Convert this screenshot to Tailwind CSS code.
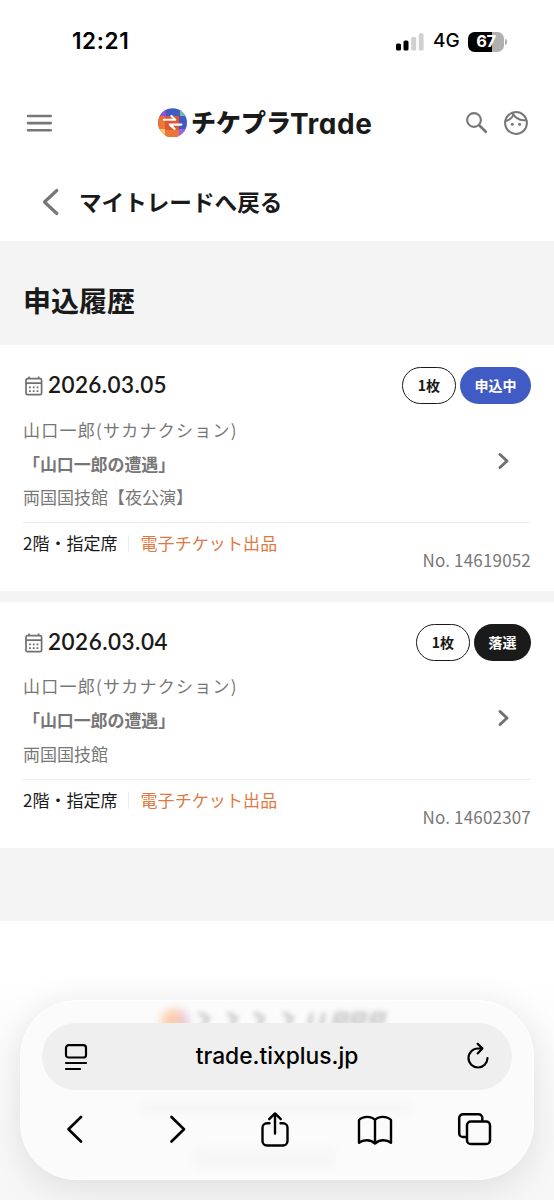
<!DOCTYPE html>
<html lang="ja">
<head>
<meta charset="utf-8">
<meta name="viewport" content="width=device-width, initial-scale=1">
<title>申込履歴</title>
<script src="https://cdn.jsdelivr.net/npm/@tailwindcss/browser@4"></script>
</head>
<body class="relative h-[1200px] w-[554px] overflow-hidden bg-white font-['Noto_Sans_CJK_JP',sans-serif] text-[#1a1a1a]">

<!-- Status bar -->
<div class="flex h-[84px] items-center justify-between pr-[47px] pl-[72px] font-['Inter',sans-serif] text-black">
  <span class="mt-[-2px] text-[22.5px] font-semibold tracking-[0.6px]">12:21</span>
  <div class="mt-[-1px] flex items-center">
    <svg class="h-[18px] w-[28px]" viewBox="0 0 28 18"><rect x="0" y="10.5" width="5" height="7" rx="1.6"/><rect x="7.5" y="7.5" width="5" height="10" rx="1.6"/><rect x="15.2" y="4" width="5" height="13.5" rx="1.6" fill="#d0d0d0"/><rect x="22.8" y="0.3" width="4.8" height="17.2" rx="1.6" fill="#d0d0d0"/></svg>
    <span class="ml-[9px] w-[28px] text-[19px] font-medium tracking-[0.1px]">4G</span>
    <div class="ml-[7px] flex h-[20px] w-[36px] items-center justify-center rounded-[6.5px] bg-linear-to-r from-black from-67% to-[#b0b0b0] to-67% text-[16.5px] font-bold tracking-[-0.3px] text-white">67</div>
    <div class="ml-[1px] h-[6px] w-[2px] rounded-r-full bg-[#b0b0b0]"></div>
  </div>
</div>

<!-- Site header -->
<header class="flex h-[78px] items-center pl-[26px]">
  <svg class="mt-[-1px] h-[20px] w-[27px] shrink-0" viewBox="0 0 27 20" stroke="#777" stroke-width="2.6" stroke-linecap="round"><path d="M2 3h22.7M2 10.1h22.7M2 17.2h22.7"/></svg>
  <svg class="ml-[105px] h-[30px] w-[30px] shrink-0" viewBox="0 0 30 30">
    <defs><clipPath id="disc"><circle cx="14.6" cy="14.7" r="14.4"/></clipPath></defs>
    <g clip-path="url(#disc)">
      <path fill="#425bc3" d="M0 0h30v30H0z"/>
      <path fill="#8a55d6" d="M0 0h8v8H0z"/><path fill="#66c2a5" d="M22 0h8v8h-8z"/>
      <path fill="#e96b32" d="M0 8h8v14H0zM7 21h14v9H7z"/><path fill="#c95048" d="M7 8h7v8H7z"/>
      <path fill="#dd572f" d="M7 8h14v14H7z"/><path fill="#ee7538" d="M0 12h7v9H0zM7 22h14v8H7z"/>
      <path fill="#ffc66b" d="M0 21h7v9H0z"/><path fill="#9764ec" d="M21 21h9v9h-9z"/>
    </g>
    <path d="M5.8 11.8h11.4l-3.8-3.9M23.4 16.6H11.8l4.8 4.3" fill="none" stroke="#fff" stroke-width="2.1" stroke-linecap="round" stroke-linejoin="round"/>
  </svg>
  <div class="flex w-[184px] items-center pl-[3px]">
    <span class="mt-[-3px] text-[25px] leading-none font-black whitespace-nowrap">チケプラ</span>
    <span class="mt-[2px] ml-[-1px] font-['Inter',sans-serif] text-[28px] leading-[34px] font-bold tracking-[0.5px] [font-feature-settings:'cv11']">Trade</span>
  </div>
  <svg class="ml-[93px] h-[24px] w-[24px] shrink-0" viewBox="0 0 24 24" fill="none" stroke="#777" stroke-width="2.1"><circle cx="9" cy="9" r="6.9"/><path stroke-width="2.7" stroke-linecap="round" d="M14.2 14.2l6.600 6.600"/></svg>
  <svg class="ml-[14px] h-[26px] w-[26px] shrink-0" viewBox="0 0 26 26" fill="none" stroke="#777" stroke-width="2"><circle cx="13" cy="13" r="10.9"/><path d="M9.2 3c3 5 7.600 8 14.200 6.900M2.700 11c4.500-1.100 7.100-3.600 8.100-7.400"/><circle cx="9.300" cy="14.200" r="1.500" fill="#777" stroke="none"/><circle cx="16.600" cy="14.200" r="1.500" fill="#777" stroke="none"/></svg>
</header>

<!-- Back link -->
<div class="flex h-[79px] items-center pl-[42px]">
  <svg class="h-[28px] w-[18px]" viewBox="0 0 18 28"><path d="M14.8 2.5L2.500 14l12.300 11.500" fill="none" stroke="#777" stroke-width="3.2" stroke-linecap="round" stroke-linejoin="round"/></svg>
  <span class="ml-[19px] text-[22.6px] font-bold whitespace-nowrap">マイトレードへ戻る</span>
</div>

<main class="h-[680px] bg-[#f4f4f4]">
  <h1 class="flex h-[104px] items-center pt-[13px] pl-[23px] text-[28px] leading-none font-bold">申込履歴</h1>

  <article class="h-[246px] bg-white px-[23px] pt-[22px]">
    <div class="flex h-[37px] items-center">
      <svg class="mt-[1px] ml-[2px] h-[20px] w-[18px]" viewBox="0 0 18 20" fill="none" stroke="#707070" stroke-width="1.7"><rect x="1" y="2.7" width="15.6" height="16" rx="1.5"/><path d="M1 7.2h15.6M4 .4v2.6M13.6 .4v2.6"/><path stroke-width="1.8" stroke-dasharray="1.8 2" d="M4 11.3h10M4 15.2h10"/></svg>
      <span class="mt-[-1px] ml-[5px] font-['Lato',sans-serif] text-[22.500px] leading-none font-semibold tracking-[0.4px]">2026.03.05</span>
      <span class="ml-auto flex h-[37px] w-[54px] items-center justify-center rounded-full border-[1.5px] border-[#1a1a1a] text-[14px] font-bold">1枚</span>
      <span class="ml-[4px] flex h-[37px] w-[71px] items-center justify-center rounded-full bg-[#405bc3] text-[14px] font-bold text-white">申込中</span>
    </div>
    <div class="mt-[9px] flex h-[110px] items-center justify-between border-b border-[#ededed] pb-[8px] text-[17px] leading-[33.7px] text-[#777]">
      <div>
        <p class="tracking-[1.25px]">山口一郎(サカナクション)</p>
        <p class="font-bold tracking-[-0.1px]">「山口一郎の遭遇」</p>
        <p>両国国技館【夜公演】</p>
      </div>
      <svg class="mt-[-5px] mr-[21px] h-[18px] w-[13px]" viewBox="0 0 13 18"><path d="M3 2.500L10 9l-7 6.500" fill="none" stroke="#707070" stroke-width="3" stroke-linecap="round" stroke-linejoin="round"/></svg>
    </div>
    <div class="flex text-[17px] leading-[26px]">
      <span class="mt-[7px]">2階・指定席</span>
      <span class="mt-[12px] ml-[11px] h-[17px] w-px bg-[#ededed]"></span>
      <span class="mt-[7px] ml-[11px] tracking-[0.1px] text-[#e07840]">電子チケット出品</span>
      <span class="mt-[24px] ml-auto tracking-[0.18px] text-[#777]">No. 14619052</span>
    </div>
  </article>

  <article class="mt-[11px] h-[246px] bg-white px-[23px] pt-[22px]">
    <div class="flex h-[37px] items-center">
      <svg class="mt-[1px] ml-[2px] h-[20px] w-[18px]" viewBox="0 0 18 20" fill="none" stroke="#707070" stroke-width="1.7"><rect x="1" y="2.7" width="15.6" height="16" rx="1.5"/><path d="M1 7.2h15.6M4 .4v2.6M13.6 .4v2.6"/><path stroke-width="1.8" stroke-dasharray="1.8 2" d="M4 11.3h10M4 15.2h10"/></svg>
      <span class="mt-[-1px] ml-[5px] font-['Lato',sans-serif] text-[22.500px] leading-none font-semibold tracking-[0.5px]">2026.03.04</span>
      <span class="ml-auto flex h-[37px] w-[54px] items-center justify-center rounded-full border-[1.5px] border-[#1a1a1a] text-[14px] font-bold">1枚</span>
      <span class="ml-[4px] flex h-[37px] w-[57px] items-center justify-center rounded-full bg-[#1a1a1a] text-[14px] font-bold text-white">落選</span>
    </div>
    <div class="mt-[9px] flex h-[110px] items-center justify-between border-b border-[#ededed] pb-[9px] text-[17px] leading-[33.7px] text-[#777]">
      <div>
        <p class="tracking-[1.25px]">山口一郎(サカナクション)</p>
        <p class="font-bold tracking-[-0.1px]">「山口一郎の遭遇」</p>
        <p>両国国技館</p>
      </div>
      <svg class="mt-[-5px] mr-[21px] h-[18px] w-[13px]" viewBox="0 0 13 18"><path d="M3 2.500L10 9l-7 6.500" fill="none" stroke="#707070" stroke-width="3" stroke-linecap="round" stroke-linejoin="round"/></svg>
    </div>
    <div class="flex text-[17px] leading-[26px]">
      <span class="mt-[7px]">2階・指定席</span>
      <span class="mt-[12px] ml-[11px] h-[17px] w-px bg-[#ededed]"></span>
      <span class="mt-[7px] ml-[11px] tracking-[0.1px] text-[#e07840]">電子チケット出品</span>
      <span class="mt-[24px] ml-auto tracking-[0.18px] text-[#777]">No. 14602307</span>
    </div>
  </article>
</main>

<!-- Floating browser toolbar -->
<div class="absolute inset-x-0 bottom-0 h-[235px] bg-linear-to-b from-transparent to-[#f6f6f6]"></div>
<nav class="absolute top-[1000px] left-[20px] h-[180px] w-[514px] overflow-visible rounded-[56px] border border-white bg-[#fbfbfb] px-[21px] pt-[22px] font-['Inter',sans-serif] text-black shadow-[0_6px_36px_rgba(0,0,0,0.11)]">
  <!-- Page footer showing through the glass -->
  <div class="absolute top-[8px] left-[140px] h-[26px] w-[28px] rounded-full bg-linear-to-r from-[#ff8a3d] from-60% to-[#9764ec] opacity-40 blur-[4px]"></div>
  <svg class="absolute top-[8px] left-[174px] h-[20px] w-[204px] opacity-25 blur-[2.5px]" viewBox="0 0 204 20" fill="none" stroke="#444" stroke-width="4.500"><path d="M4 4l9 5-5 8M32 4l9 5-5 8M59 4l9 5-5 8M88 4l9 5-5 8M117 4l-3 14M129 4l-3 14M152 5h-10l-3 8h11zM170 5h-10l-3 8h11zM189 5h-10l-3 8h11z"/></svg>
  <div class="absolute top-[102px] left-[120px] h-[10px] w-[270px] bg-black/2 blur-[4px]"></div>
  <div class="absolute top-[147px] left-[174px] h-[20px] w-[140px] bg-black/2 blur-[5px]"></div>

  <div class="relative flex h-[67px] items-center rounded-full bg-[#efefef] px-[22px]">
    <svg class="h-[28px] w-[24px]" viewBox="0 0 24 28" fill="none" stroke="#000" stroke-width="2.2" stroke-linecap="round"><rect x="2" y="2.2" width="20" height="12.300" rx="2.600"/><path d="M2 20h20M2 26h14"/></svg>
    <span class="flex-1 text-center text-[22.800px] font-medium">trade.tixplus.jp</span>
    <svg class="mt-[-2px] h-[28px] w-[24px]" viewBox="0 0 24 28" fill="none" stroke="#000" stroke-width="2.2" stroke-linecap="round" stroke-linejoin="round"><path d="M21.500 16a9.500 9.500 0 1 1-9.500-9.500h3.600M11.600 1.800l4.800 4.600-4.800 5"/></svg>
  </div>

  <div class="relative flex h-[80px] items-center pl-[24px]">
    <svg class="mt-[-2px] h-[28px] w-[18px]" viewBox="0 0 18 28" fill="none" stroke="#000" stroke-width="2.600" stroke-linecap="round" stroke-linejoin="round"><path d="M15 2L2.500 14.200 15 26.500"/></svg>
    <svg class="mt-[-2px] ml-[85px] h-[28px] w-[18px]" viewBox="0 0 18 28" fill="none" stroke="#000" stroke-width="2.600" stroke-linecap="round" stroke-linejoin="round"><path d="M2.500 2L15 14.200 2.500 26.500"/></svg>
    <svg class="mt-[-3px] ml-[73px] h-[36px] w-[30px]" viewBox="0 0 30 36" fill="none" stroke="#000" stroke-width="2.400" stroke-linecap="round" stroke-linejoin="round"><path d="M9.500 12.200H7a4.500 4.500 0 0 0-4.500 4.500V30a4.500 4.500 0 0 0 4.500 4.500h16A4.500 4.500 0 0 0 27.500 30V16.700a4.500 4.500 0 0 0-4.500-4.500h-2.500M15 22.500V2.500M9.200 8.200L15 2.400l5.800 5.800"/></svg>
    <svg class="mt-[-1px] ml-[67px] h-[32px] w-[36px]" viewBox="0 0 36 32" fill="none" stroke="#000" stroke-width="2.400" stroke-linecap="round" stroke-linejoin="round"><path d="M18 29.500V6C14.500 1.800 6 1.800 2 6v22.800c4.500-3.500 11.500-3.500 16 .7 4.500-4.200 11.500-4.200 16-.7V6C30 1.800 21.500 1.800 18 6"/></svg>
    <svg class="mt-[-2px] ml-[64px] h-[34px] w-[35px]" viewBox="0 0 35 34" fill="none" stroke="#000" stroke-width="2.500" stroke-linejoin="round"><rect x="10" y="9.500" width="23" height="22.500" rx="3.800"/><path d="M10 25H6a3.800 3.800 0 0 1-3.800-3.800V6A3.800 3.800 0 0 1 6 2.200h15.500A3.800 3.800 0 0 1 25.300 6v3.500"/></svg>
  </div>
</nav>
</body>
</html>
